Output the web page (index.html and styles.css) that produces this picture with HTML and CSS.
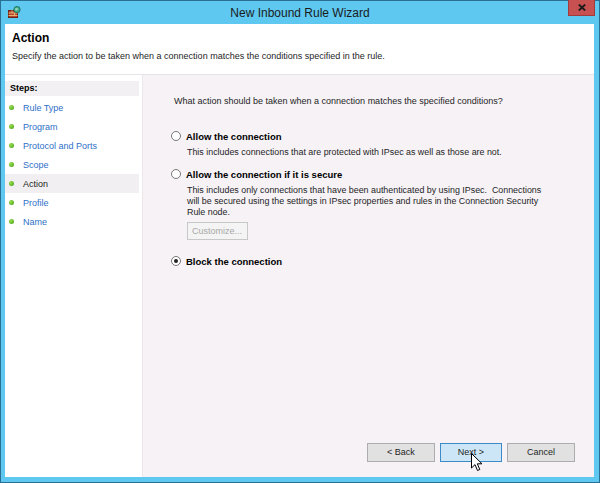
FILE: index.html
```html
<!DOCTYPE html>
<html>
<head>
<meta charset="utf-8">
<link rel="stylesheet" href="styles.css">
</head>
<body>
<div class="window">
  <div class="titlebar">
    <div class="tb-left">
      <svg class="app-icon" width="13" height="12" viewBox="0 0 13 12">
        <rect x="0.5" y="4.5" width="9" height="7" fill="#b5462e" stroke="#6e2414" stroke-width="1"/>
        <line x1="0.5" y1="7" x2="9.5" y2="7" stroke="#e8b070" stroke-width="1"/>
        <line x1="0.5" y1="9.5" x2="9.5" y2="9.5" stroke="#e8b070" stroke-width="1"/>
        <line x1="4" y1="4.5" x2="4" y2="7" stroke="#e8b070" stroke-width="1"/>
        <line x1="6.5" y1="7" x2="6.5" y2="9.5" stroke="#e8b070" stroke-width="1"/>
        <circle cx="9" cy="3.6" r="3.2" fill="#3aa88a" stroke="#1d6e57" stroke-width="0.8"/>
        <path d="M7 2.5 Q9 1.5 10.5 3 Q9.5 5 7.5 4.8 Z" fill="#8fd8b8"/>
      </svg>
    </div>
    <div class="title">New Inbound Rule Wizard</div>
    <div class="tb-right">
      <div class="close">
        <svg width="8" height="7" viewBox="0 0 8 7"><path d="M0.8 0.5 L7.2 6.5 M7.2 0.5 L0.8 6.5" stroke="#1a1a1a" stroke-width="1.8"/></svg>
      </div>
    </div>
  </div>
  <div class="client">
    <div class="header">
      <div class="h-title">Action</div>
      <div class="h-sub">Specify the action to be taken when a connection matches the conditions specified in the rule.</div>
    </div>
    <div class="body">
      <div class="steps">
        <div class="steps-head">Steps:</div>
        <ul class="step-list">
          <li class="step"><span class="dot"></span><span class="link">Rule Type</span></li>
          <li class="step"><span class="dot"></span><span class="link">Program</span></li>
          <li class="step"><span class="dot"></span><span class="link">Protocol and Ports</span></li>
          <li class="step"><span class="dot"></span><span class="link">Scope</span></li>
          <li class="step current"><span class="dot"></span><span class="cur">Action</span></li>
          <li class="step"><span class="dot"></span><span class="link">Profile</span></li>
          <li class="step"><span class="dot"></span><span class="link">Name</span></li>
        </ul>
      </div>
      <div class="main">
        <div class="content">
          <p class="question">What action should be taken when a connection matches the specified conditions?</p>
          <div class="option opt1">
            <div class="opt-row"><span class="radio"></span><span class="opt-label">Allow the connection</span></div>
            <p class="opt-desc">This includes connections that are protected with IPsec as well as those are not.</p>
          </div>
          <div class="option opt2">
            <div class="opt-row"><span class="radio"></span><span class="opt-label">Allow the connection if it is secure</span></div>
            <p class="opt-desc">This includes only connections that have been authenticated by using IPsec.&nbsp; Connections will be secured using the settings in IPsec properties and rules in the Connection Security Rule node.</p>
            <div class="customize">Customize...</div>
          </div>
          <div class="option opt3">
            <div class="opt-row"><span class="radio checked"></span><span class="opt-label">Block the connection</span></div>
          </div>
        </div>
        <div class="buttons">
          <div class="btn">&lt; Back</div>
          <div class="btn primary">Next &gt;
            <svg class="cursor" width="12" height="19" viewBox="0 0 12 19">
              <path d="M0.5 0.5 L0.5 15 L4 11.6 L6.5 17.5 L8.8 16.5 L6.3 10.8 L11 10.8 Z" fill="#fff" stroke="#000" stroke-width="1" stroke-linejoin="miter"/>
            </svg>
          </div>
          <div class="btn">Cancel</div>
        </div>
      </div>
    </div>
  </div>
</div>
</body>
</html>
```
FILE: styles.css
```css
html, body {
  margin: 0;
  padding: 0;
}
body {
  width: 600px;
  height: 483px;
  overflow: hidden;
  font-family: "Liberation Sans", Arial, sans-serif;
  font-size: 9px;
  color: #1e1e1e;
}
.window {
  width: 600px;
  height: 483px;
  box-sizing: border-box;
  border: 1px solid #2a6f94;
  background: #5fc8f1;
  display: flex;
  flex-direction: column;
}
.titlebar {
  height: 23px;
  display: grid;
  grid-template-columns: 1fr auto 1fr;
  align-items: start;
  flex-shrink: 0;
}
.tb-left {
  padding: 5px 0 0 7px;
}
.app-icon {
  display: block;
}
.title {
  font-family: "Liberation Sans", Arial, sans-serif;
  font-size: 12px;
  color: #1a1a1a;
  line-height: 12px;
  padding-top: 6px;
}
.tb-right {
  display: flex;
  justify-content: flex-end;
}
.close {
  width: 27px;
  height: 16px;
  margin-right: 4px;
  margin-top: -1px;
  background: #c75050;
  border: 1px solid #a03c3c;
  border-top: none;
  box-sizing: border-box;
  display: flex;
  align-items: center;
  justify-content: center;
}
.client {
  flex: 1;
  margin: 0 5px 5px 4px;
  background: #f6f2f6;
  display: flex;
  flex-direction: column;
  min-height: 0;
}
.header {
  height: 51px;
  background: #ffffff;
  border-bottom: 1px solid #e4e4e8;
  box-sizing: border-box;
  padding: 7px 0 0 7px;
  flex-shrink: 0;
}
.h-title {
  font-weight: bold;
  font-size: 12px;
  line-height: 14px;
  color: #000;
}
.h-sub {
  margin-top: 6px;
  font-size: 9px;
  line-height: 11px;
  color: #1e1e1e;
}
.body {
  flex: 1;
  display: flex;
  min-height: 0;
}
.steps {
  width: 137px;
  background: #ffffff;
  border-right: 1px solid #ebe7eb;
  padding-top: 6px;
  flex-shrink: 0;
}
.steps-head {
  height: 15px;
  line-height: 15px;
  background: #f2f0f2;
  font-weight: bold;
  color: #000;
  padding-left: 5px;
  margin-right: 3px;
}
.step-list {
  list-style: none;
  margin: 2px 0 0 0;
  padding: 0;
}
.step {
  height: 19px;
  display: flex;
  align-items: center;
  margin-right: 3px;
}
.step.current {
  background: #f1eff1;
}
.dot {
  width: 5px;
  height: 5px;
  border-radius: 50%;
  background: radial-gradient(circle at 35% 35%, #9be04a, #3f9a1a);
  margin: 0 9px 0 4px;
  flex-shrink: 0;
}
.link {
  color: #2e6fc8;
}
.cur {
  color: #1e1e1e;
}
.main {
  flex: 1;
  display: flex;
  flex-direction: column;
  min-width: 0;
}
.content {
  flex: 1;
  padding: 21px 0 0 31px;
}
p {
  margin: 0;
}
.question {
  line-height: 11px;
}
.opt1 {
  margin-top: 23px;
}
.opt2 {
  margin-top: 10px;
}
.opt3 {
  margin-top: 15px;
}
.opt-row {
  display: flex;
  align-items: center;
  height: 12px;
}
.radio {
  width: 10px;
  height: 10px;
  border: 1px solid #777;
  border-radius: 50%;
  background: #fff;
  box-sizing: border-box;
  margin-left: -3px;
  margin-right: 5px;
  position: relative;
  flex-shrink: 0;
}
.radio.checked::after {
  content: "";
  position: absolute;
  left: 2px;
  top: 2px;
  width: 4px;
  height: 4px;
  border-radius: 50%;
  background: #222;
}
.opt-label {
  font-weight: bold;
  color: #000;
  font-size: 9.5px;
}
.opt-desc {
  margin: 5px 0 0 13px;
  width: 362px;
  font-size: 8.9px;
  line-height: 11px;
}
.customize {
  margin: 4px 0 0 13px;
  width: 61px;
  height: 18px;
  box-sizing: border-box;
  border: 1px solid #c8c8c8;
  background: #f4f4f4;
  color: #a8a8a8;
  line-height: 16px;
  padding-left: 4px;
}
.buttons {
  display: flex;
  justify-content: flex-end;
  gap: 5px;
  padding: 0 19px 15px 0;
}
.btn {
  width: 68px;
  height: 19px;
  box-sizing: border-box;
  border: 1px solid #adadad;
  background: #e1e1e1;
  text-align: center;
  line-height: 17px;
  color: #1e1e1e;
  position: relative;
}
.btn.primary {
  width: 62px;
  background: #cde6f7;
  border-color: #3c8ac6;
}
.cursor {
  position: absolute;
  left: 30px;
  top: 9px;
}
```
